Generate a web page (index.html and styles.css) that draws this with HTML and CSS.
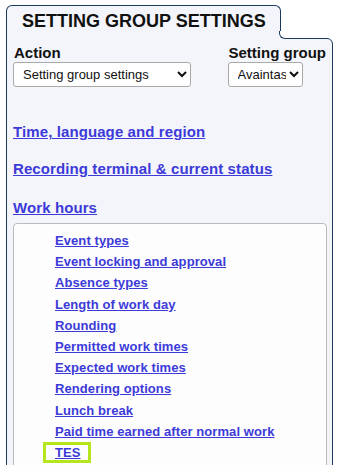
FILE: index.html
```html
<!DOCTYPE html>
<html lang="en">
	<head>
		<meta charset="UTF-8" />
		<meta name="viewport" content="width=device-width, initial-scale=1.0" />
		<title>Setting group settings</title>
		<link rel="stylesheet" href="styles.css">
	</head>
	<body>
		<div class="viewport">
			<div class="frame">
				<div class="tab">SETTING GROUP SETTINGS</div>
				<div class="panel">
					<div class="filters">
						<div class="field">
							<label for="action">Action</label>
							<select id="action" class="select-action">
								<option>Setting group settings</option>
							</select>
						</div>
						<div class="field field-right">
							<label for="group">Setting group</label>
							<select id="group" class="select-group">
								<option>Avaintaso</option>
							</select>
						</div>
					</div>

					<a class="section-link first" href="#">Time, language and region</a>
					<a class="section-link" href="#">Recording terminal &amp; current status</a>
					<a class="section-link last" href="#">Work hours</a>

					<div class="sub-list">
						<div class="item"><a href="#">Event types</a></div>
						<div class="item"><a href="#">Event locking and approval</a></div>
						<div class="item"><a href="#">Absence types</a></div>
						<div class="item"><a href="#">Length of work day</a></div>
						<div class="item"><a href="#">Rounding</a></div>
						<div class="item"><a href="#">Permitted work times</a></div>
						<div class="item"><a href="#">Expected work times</a></div>
						<div class="item"><a href="#">Rendering options</a></div>
						<div class="item"><a href="#">Lunch break</a></div>
						<div class="item"><a href="#">Paid time earned after normal work</a></div>
						<div class="item"><a class="highlight" href="#">TES</a></div>
					</div>
				</div>
			</div>
		</div>
	</body>
</html>
```

FILE: styles.css
```css
* {
	margin: 0;
	padding: 0;
	box-sizing: border-box;
	font-family: "Liberation Sans", Arial, sans-serif;
}

body {
	background-color: #ffffff;
}

.viewport {
	height: 465px;
	overflow: hidden;
	padding: 5px 0 0 6px;
}

.frame {
	width: 327px;
}

.tab {
	position: relative;
	z-index: 1;
	width: 275px;
	height: 34px;
	margin-bottom: -1px;
	padding: 5px 0 0 15px;
	background-color: #f4f5fa;
	border: 1px solid #1b3a5e;
	border-bottom: none;
	border-radius: 6px 6px 0 0;
	font-size: 18px;
	line-height: 20px;
	font-weight: 700;
	color: #111;
}

/* concave corner where the tab meets the panel */
.tab::before {
	content: "";
	position: absolute;
	right: -6px;
	bottom: 0;
	width: 7px;
	height: 6px;
	background-color: #f4f5fa;
}

.tab::after {
	content: "";
	position: absolute;
	right: -7px;
	bottom: 0;
	width: 7px;
	height: 7px;
	background-color: #ffffff;
	border-left: 1px solid #1b3a5e;
	border-bottom: 1px solid #1b3a5e;
	border-bottom-left-radius: 6px;
}

.panel {
	background-color: #f4f5fa;
	border: 1px solid #1b3a5e;
	border-top-right-radius: 6px;
	padding: 5px 5px 60px 6px;
}

.filters {
	display: flex;
}

.field {
	display: flex;
	flex-direction: column;
}

.field-right {
	margin-left: auto;
	padding-right: 1px;
}

label {
	font-size: 15px;
	line-height: 18px;
	font-weight: 700;
	color: #111;
	padding-left: 1px;
}

select {
	height: 25px;
	font-size: 13px;
	color: #111;
	background-color: #ffffff;
	border: 1px solid #a9a9a9;
	border-radius: 3px;
	padding-left: 5px;
}

.select-action {
	width: 178px;
}

.select-group {
	width: 75px;
}

.section-link {
	display: block;
	width: max-content;
	font-size: 15px;
	line-height: 18px;
	font-weight: 700;
	letter-spacing: 0.1px;
	color: #3c3ad8;
	margin-top: 19px;
}

.section-link.first {
	margin-top: 36px;
}

.section-link.last {
	margin-top: 21px;
}

a {
	color: #3c3ad8;
	text-decoration: underline;
}

.sub-list {
	margin-top: 6px;
	background-color: #fdfdfe;
	border: 1px solid #bababa;
	border-radius: 4px;
	padding: 6px 0 60px 41px;
}

.item {
	font-size: 13px;
	line-height: 21.2px;
	font-weight: 700;
	letter-spacing: 0.08px;
}

.highlight {
	display: inline-block;
	line-height: 15px;
	margin-left: -12px;
	padding: 0 7px 0 9px;
	border: 3px solid #b5e61d;
}
```
